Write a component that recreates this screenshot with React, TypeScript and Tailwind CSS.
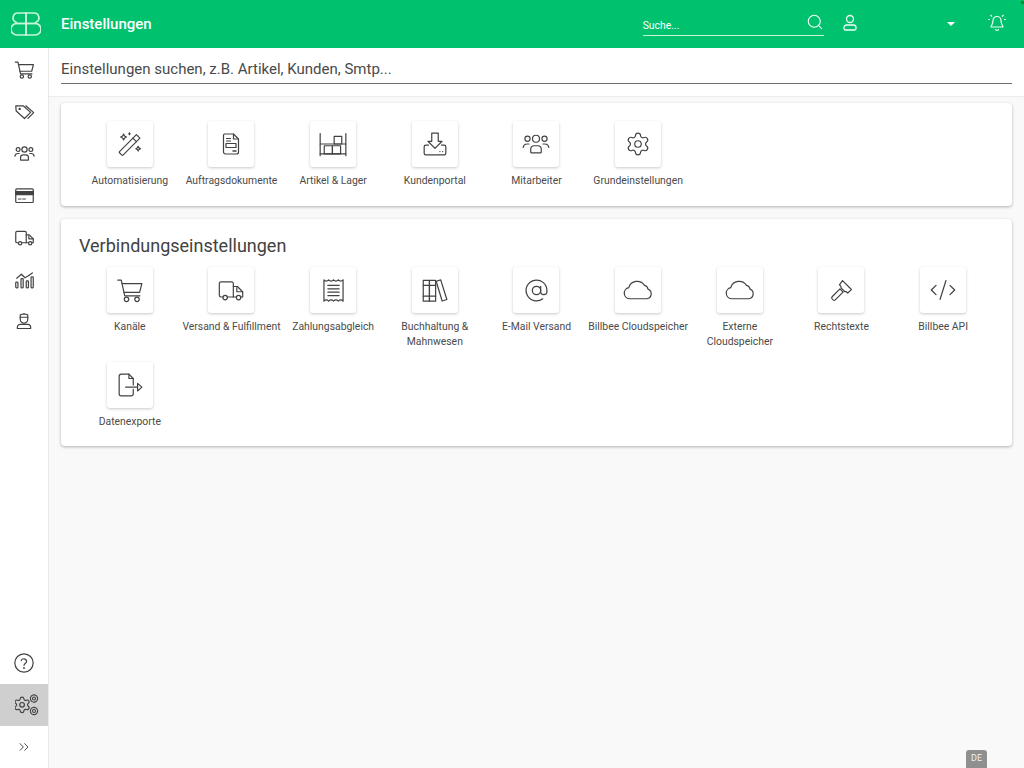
import { AtSign, ChevronsRight, CodeXml, Search } from "lucide-react";
import type { ReactNode } from "react";

const gear =
  "M9.671 4.136a2.34 2.34 0 0 1 4.659 0 2.34 2.34 0 0 0 3.319 1.915 2.34 2.34 0 0 1 2.33 4.033 2.34 2.34 0 0 0 0 3.831 2.34 2.34 0 0 1-2.33 4.033 2.34 2.34 0 0 0-3.319 1.915 2.34 2.34 0 0 1-4.659 0 2.34 2.34 0 0 0-3.32-1.915 2.34 2.34 0 0 1-2.33-4.033 2.34 2.34 0 0 0 0-3.831A2.34 2.34 0 0 1 6.35 6.051a2.34 2.34 0 0 0 3.319-1.915";

type IconProps = { size?: number };

const Icon = ({ children, size = 24 }: { children: ReactNode; size?: number }) => (
  <svg
    width={size}
    height={size}
    viewBox="0 0 24 24"
    fill="none"
    stroke="#424242"
    strokeWidth={(1.2 * 24) / size}
    strokeLinecap="round"
    strokeLinejoin="round"
  >
    {children}
  </svg>
);

const CartIcon = ({ size }: IconProps) => (
  <Icon size={size}>
    <path d="M1.5 3.5h3l3 13.5h13" />
    <path d="M5.2 6.5h17l-2 7.5H6.8" />
    <circle cx="9" cy="20" r="1.9" />
    <circle cx="18" cy="20" r="1.9" />
  </Icon>
);

const TagsIcon = ({ size }: IconProps) => (
  <Icon size={size}>
    <path d="M2 5.5h8.5l8.5 7.5-7 7L2.5 11.5z" />
    <path d="M13.5 5.5l9 7.8-6.5 6.5" />
    <circle cx="6.5" cy="9" r="0.7" />
  </Icon>
);

const TeamIcon = ({ size }: IconProps) => (
  <Icon size={size}>
    <circle cx="12" cy="7.5" r="3" />
    <circle cx="4.7" cy="7.5" r="2.2" />
    <circle cx="19.3" cy="7.5" r="2.2" />
    <path d="M7.5 19v-2.5a3 3 0 0 1 3-3h3a3 3 0 0 1 3 3V19a.6.6 0 0 1-.6.6H8.1a.6.6 0 0 1-.6-.6z" />
    <path d="M1 15a3.6 3.6 0 0 1 3.6-3H6" />
    <path d="M23 15a3.6 3.6 0 0 0-3.6-3H18" />
  </Icon>
);

const CardIcon = ({ size }: IconProps) => (
  <Icon size={size}>
    <rect x="2" y="4.5" width="20" height="15.5" rx="1.2" />
    <rect x="2" y="7.5" width="20" height="3.5" fill="#424242" />
    <path d="M5 16h3M10 16h3" />
  </Icon>
);

const TruckIcon = ({ size }: IconProps) => (
  <Icon size={size}>
    <path d="M5.2 18H3.5A1.5 1.5 0 0 1 2 16.5v-10A1.5 1.5 0 0 1 3.500 5h9A1.500 1.500 0 0 1 14 6.500V18H8.800" />
    <path d="M14 9h3.500l4.500 4.500V18h-1.800" />
    <path d="M14 18h2.700M17 10v3.500h5" />
    <circle cx="7" cy="18.500" r="1.900" />
    <circle cx="18.500" cy="18.500" r="1.900" />
  </Icon>
);

const ChartIcon = ({ size }: IconProps) => (
  <Icon size={size}>
    <path d="M3 10.500L8.500 6l4 4 3.500-2 5-3.500" />
    <rect x="2" y="15" width="2.500" height="6.500" rx="0.800" />
    <rect x="8" y="11" width="2.500" height="10.500" rx="0.800" />
    <rect x="14" y="13.500" width="2.500" height="8" rx="0.800" />
    <rect x="19.500" y="9" width="2.500" height="12.500" rx="0.800" />
  </Icon>
);

const AgentIcon = ({ size }: IconProps) => (
  <Icon size={size}>
    <path d="M7.500 4.500L12 3.500l4.500 1V10a4.500 4.500 0 0 1-9 0z" />
    <path d="M7.500 7.500h9" />
    <path d="M4 21v-1.500A3.500 3.500 0 0 1 7.500 16h9a3.500 3.500 0 0 1 3.500 3.500V21z" />
  </Icon>
);

const HelpIcon = ({ size }: IconProps) => (
  <Icon size={size}>
    <circle cx="12" cy="12" r="10" />
    <path d="M9 9.300a3 3 0 0 1 5.800 1c0 2-2.800 2.500-2.800 4.200" />
    <circle cx="12" cy="17.500" r="0.400" />
  </Icon>
);

// big gear plus two small ones, wider than it is tall
const GearsIcon = () => (
  <svg width="24" height="24" viewBox="0 0 24 24" fill="none" stroke="#424242" strokeLinecap="round" strokeLinejoin="round">
    <g transform="translate(-2.300 2.500) scale(0.78)" strokeWidth="1.500">
      <path d={gear} />
      <circle cx="12" cy="12" r="3" />
    </g>
    <g strokeWidth="1.100">
      <circle cx="19" cy="5.500" r="3.600" strokeDasharray="1.600 0.500" />
      <circle cx="19" cy="5.500" r="1.500" />
      <circle cx="19" cy="18" r="3.600" strokeDasharray="1.600 0.500" />
      <circle cx="19" cy="18" r="1.500" />
    </g>
  </svg>
);

const WandIcon = ({ size }: IconProps) => (
  <Icon size={size}>
    <path d="M3 18.500L17.500 4l3 3L6 21.500a.7.7 0 0 1-1 0l-2-2a.7.7 0 0 1 0-1z" />
    <path d="M14.500 7l3 3" />
    <path d="M6.500 3.500l.8 1.700 1.700.8-1.700.8-.8 1.700-.8-1.700L4 6l1.700-.8z" />
    <path d="M11.500 2.500v1.500M10.800 3.200h1.500" />
    <path d="M19 14l.7 1.300 1.300.7-1.300.7-.7 1.300-.7-1.300-1.300-.7 1.300-.7z" />
  </Icon>
);

const DocIcon = ({ size }: IconProps) => (
  <Icon size={size}>
    <path d="M5.500 2h9l5 5v13a2 2 0 0 1-2 2h-11a2 2 0 0 1-2-2V3.500A1.500 1.500 0 0 1 5.500 2z" />
    <path d="M14.500 2v5h5" />
    <path d="M7.500 6.500h4M7.500 9h4" />
    <rect x="7" y="11.500" width="10" height="4" />
    <path d="M14 19h3" strokeWidth="1.500" />
  </Icon>
);

const ShelfIcon = ({ size }: IconProps) => (
  <Icon size={size}>
    <path d="M1 3v19M23 3v19" />
    <path d="M1 12h22M1 20.500h22" />
    <rect x="4.500" y="13.500" width="7" height="7" />
    <rect x="11.500" y="13.500" width="7" height="7" />
    <rect x="13" y="5.500" width="6.500" height="6.500" />
  </Icon>
);

const InboxIcon = ({ size }: IconProps) => (
  <Icon size={size}>
    <path d="M9 2h6v7.500h3.500L12 16 5.500 9.500H9z" />
    <path d="M6 13H3.500A1.500 1.500 0 0 0 2 14.500v6A1.500 1.500 0 0 0 3.500 22h17a1.500 1.500 0 0 0 1.500-1.500v-6a1.500 1.500 0 0 0-1.500-1.500H18" />
    <path d="M16.500 19h.1M19 19h.1" />
  </Icon>
);

const GearIcon = ({ size }: IconProps) => (
  <Icon size={size}>
    <path d={gear} />
    <circle cx="12" cy="12" r="3" />
  </Icon>
);

const ReceiptIcon = ({ size }: IconProps) => (
  <Icon size={size}>
    <path d="M3.500 2.500c1.400 1.500 2.800 1.500 4.200 0 1.400 1.500 2.900 1.500 4.300 0 1.400 1.500 2.900 1.500 4.300 0 1.400 1.500 2.800 1.500 4.200 0v19c-1.400-1.500-2.800-1.500-4.200 0-1.400-1.500-2.900-1.500-4.300 0-1.400-1.500-2.900-1.500-4.300 0-1.400-1.500-2.800-1.500-4.200 0z" />
    <path d="M7 7.500h10M7 10.500h10M7 13.500h10M7 16.500h10" />
  </Icon>
);

const BooksIcon = ({ size }: IconProps) => (
  <Icon size={size}>
    <rect x="2" y="3" width="5.500" height="18.500" />
    <rect x="7.500" y="3" width="5.500" height="18.500" />
    <path d="M2 7.500h11M2 17h11" />
    <path d="M13.500 3.800l4-1.300 5.500 17.500-4.200 1.300z" />
  </Icon>
);

const CloudIcon = ({ size }: IconProps) => (
  <Icon size={size}>
    <path d="M5.500 19a4.500 4.500 0 0 1-.9-8.900A7 7 0 0 1 17.200 8.300a3.600 3.600 0 0 1 2.800 3A4 4 0 0 1 19 19z" />
  </Icon>
);

const GavelIcon = ({ size }: IconProps) => (
  <Icon size={size}>
    <path d="M13 2.500l8.500 8.500-3.500 3.500-1.500-1.500h-1.500l-3.500-3.500V8l-1.500-1.500z" />
    <path d="M10.500 10.500l3 3-7.500 7.500a1.500 1.500 0 0 1-2 0l-1-1a1.500 1.500 0 0 1 0-2z" />
  </Icon>
);

const ExportIcon = ({ size }: IconProps) => (
  <Icon size={size}>
    <path d="M15 16v4a2 2 0 0 1-2 2H4a2 2 0 0 1-2-2V4a2 2 0 0 1 2-2h7l4 4v6" />
    <path d="M11 2v4h4" />
    <path d="M8 14h11" />
    <path d="M19 10.500l4 3.500-4 3.500z" />
  </Icon>
);

const Logo = () => (
  <svg width="30" height="24" viewBox="0 0 30 24" fill="none" stroke="#c8f5dc" strokeWidth="1.700">
    <path d="M15 1H7a4.800 4.800 0 0 0-2 9.200L5.500 11.500H15z" />
    <path d="M15 1h8a4.800 4.800 0 0 1 2 9.200l-.5 1.300H15z" />
    <path d="M15 11.500H5.500A5.500 5.500 0 0 0 6 23h9z" />
    <path d="M15 11.500h9.500A5.500 5.500 0 0 1 24 23h-9z" />
  </svg>
);

const Tile = ({ label, icon }: { label: string; icon: ReactNode }) => (
  <div className="flex flex-col items-center">
    <div className="flex h-[46px] w-[46px] items-center justify-center rounded-[3px] bg-white shadow-[0_1px_3px_rgba(0,0,0,0.22)]">
      {icon}
    </div>
    <div className="mt-[6px] text-center text-[10.4px] leading-[15px] text-[#4a4a4a]">{label}</div>
  </div>
);

const basics = [
  { label: "Automatisierung", icon: <WandIcon size={28} /> },
  { label: "Auftragsdokumente", icon: <DocIcon size={24} /> },
  { label: "Artikel & Lager", icon: <ShelfIcon size={28} /> },
  { label: "Kundenportal", icon: <InboxIcon size={26} /> },
  { label: "Mitarbeiter", icon: <TeamIcon size={28} /> },
  { label: "Grundeinstellungen", icon: <GearIcon size={26} /> },
];

const connections = [
  { label: "Kanäle", icon: <CartIcon size={28} /> },
  { label: "Versand & Fulfillment", icon: <TruckIcon size={28} /> },
  { label: "Zahlungsabgleich", icon: <ReceiptIcon size={27} /> },
  { label: "Buchhaltung & Mahnwesen", icon: <BooksIcon size={27} /> },
  { label: "E-Mail Versand", icon: <AtSign size={25} strokeWidth={1.2} color="#424242" /> },
  { label: "Billbee Cloudspeicher", icon: <CloudIcon size={30} /> },
  { label: "Externe Cloudspeicher", icon: <CloudIcon size={30} /> },
  { label: "Rechtstexte", icon: <GavelIcon size={25} /> },
  { label: "Billbee API", icon: <CodeXml size={28} strokeWidth={1.1} color="#424242" /> },
  { label: "Datenexporte", icon: <ExportIcon size={26} /> },
];

const navTop = [
  <CartIcon size={21} />,
  <TagsIcon size={21} />,
  <TeamIcon size={21} />,
  <CardIcon size={21} />,
  <TruckIcon size={21} />,
  <ChartIcon size={21} />,
  <AgentIcon size={20} />,
];

export default function App() {
  return (
    <div className="relative flex h-[768px] w-[1024px] flex-col overflow-hidden bg-[#f9f9f9] font-['Roboto',sans-serif]">
      <header className="flex h-12 shrink-0 items-center bg-[#00c16e] text-white">
        <div className="flex w-[61px] shrink-0 pl-[11px]">
          <Logo />
        </div>
        <h1 className="text-[15px] font-medium">Einstellungen</h1>
        <div className="mb-[12px] ml-[491px] flex h-[20px] w-[181px] items-end justify-between self-end border-b border-[#c8f5dc] pb-[3px]">
          <span className="text-[10.4px] leading-[13px]">Suche...</span>
          <Search size={18} strokeWidth={1.4} color="#ffffff" className="mb-[1px]" />
        </div>
        <svg width="18" height="18" viewBox="0 0 18 18" fill="none" stroke="#f0fdf6" strokeWidth="1.3" className="mb-[2px] ml-[17px]">
          <circle cx="9" cy="5" r="3.5" />
          <path d="M3 13.500a2.500 2.500 0 0 1 2.500-2.500h7a2.500 2.500 0 0 1 2.500 2.500v1a1.500 1.500 0 0 1-1.500 1.500h-9A1.500 1.500 0 0 1 3 14.500z" />
        </svg>
        <div className="ml-[88px] h-0 w-0 border-x-[4px] border-t-[4px] border-x-transparent border-t-white" />
        <svg width="20" height="20" viewBox="0 0 20 20" fill="none" stroke="#f0fdf6" strokeWidth="1.2" className="mb-[2px] ml-[32px]">
          <path d="M10 3.500a4 4 0 0 1 4 4c0 4 2 5.500 2 6.500H4c0-1 2-2.500 2-6.500a4 4 0 0 1 4-4z" />
          <path d="M8.500 16a1.500 1.500 0 0 0 3 0" />
          <path d="M1 6.500h2M17 6.500h2M3.500 2l1.500 1.500M16.500 2L15 3.500" />
        </svg>
      </header>
      <div className="absolute right-0 top-[1px] h-[3px] w-[3px] bg-[#0a8a2e]" />

      <div className="flex min-h-0 flex-1">
        <aside className="flex w-[49px] shrink-0 flex-col justify-between border-r border-[#e8e8e8] bg-white">
          <nav className="flex flex-col">
            {navTop.map((icon, i) => (
              <div key={i} className="flex h-[42px] items-center justify-center">
                {icon}
              </div>
            ))}
          </nav>
          <div className="flex flex-col">
            <div className="flex h-[42px] items-center justify-center">
              <HelpIcon size={22} />
            </div>
            <div className="flex h-[42px] items-center justify-center bg-[#cfcfcf] pl-[5px]">
              <GearsIcon />
            </div>
            <div className="flex h-[42px] items-center justify-center">
              <ChevronsRight size={16} strokeWidth={1.4} color="#424242" />
            </div>
          </div>
        </aside>

        <main className="flex min-w-0 flex-1 flex-col">
          <div className="h-[49px] shrink-0 border-b border-[#ececec] bg-white px-3">
            <div className="flex h-[36px] items-end border-b border-[#707070] pb-[4px] text-[15px] leading-[20px] text-[#4a4a4a]">
              Einstellungen suchen, z.B. Artikel, Kunden, Smtp...
            </div>
          </div>

          <div className="flex flex-col gap-[13px] px-3 pt-[6px]">
            <section className="h-[103px] rounded-[4px] bg-white px-[18px] pt-[18px] shadow-[0_1px_3px_rgba(0,0,0,0.3)]">
              <div className="grid grid-cols-9">
                {basics.map((t) => (
                  <Tile key={t.label} {...t} />
                ))}
              </div>
            </section>
            <section className="h-[227px] rounded-[4px] bg-white px-[18px] pt-[16px] shadow-[0_1px_3px_rgba(0,0,0,0.3)]">
              <h2 className="mb-[10px] text-[18px] leading-[22px] text-[#424242]">Verbindungseinstellungen</h2>
              <div className="grid auto-rows-[95px] grid-cols-9">
                {connections.map((t) => (
                  <Tile key={t.label} {...t} />
                ))}
              </div>
            </section>
          </div>
        </main>
      </div>

      <div className="absolute bottom-0 left-[966px] flex h-[18px] w-[21px] items-center justify-center rounded-t-[3px] bg-[#8f8f8f] text-[9px] text-[#f0f0f0]">
        DE
      </div>
    </div>
  );
}
